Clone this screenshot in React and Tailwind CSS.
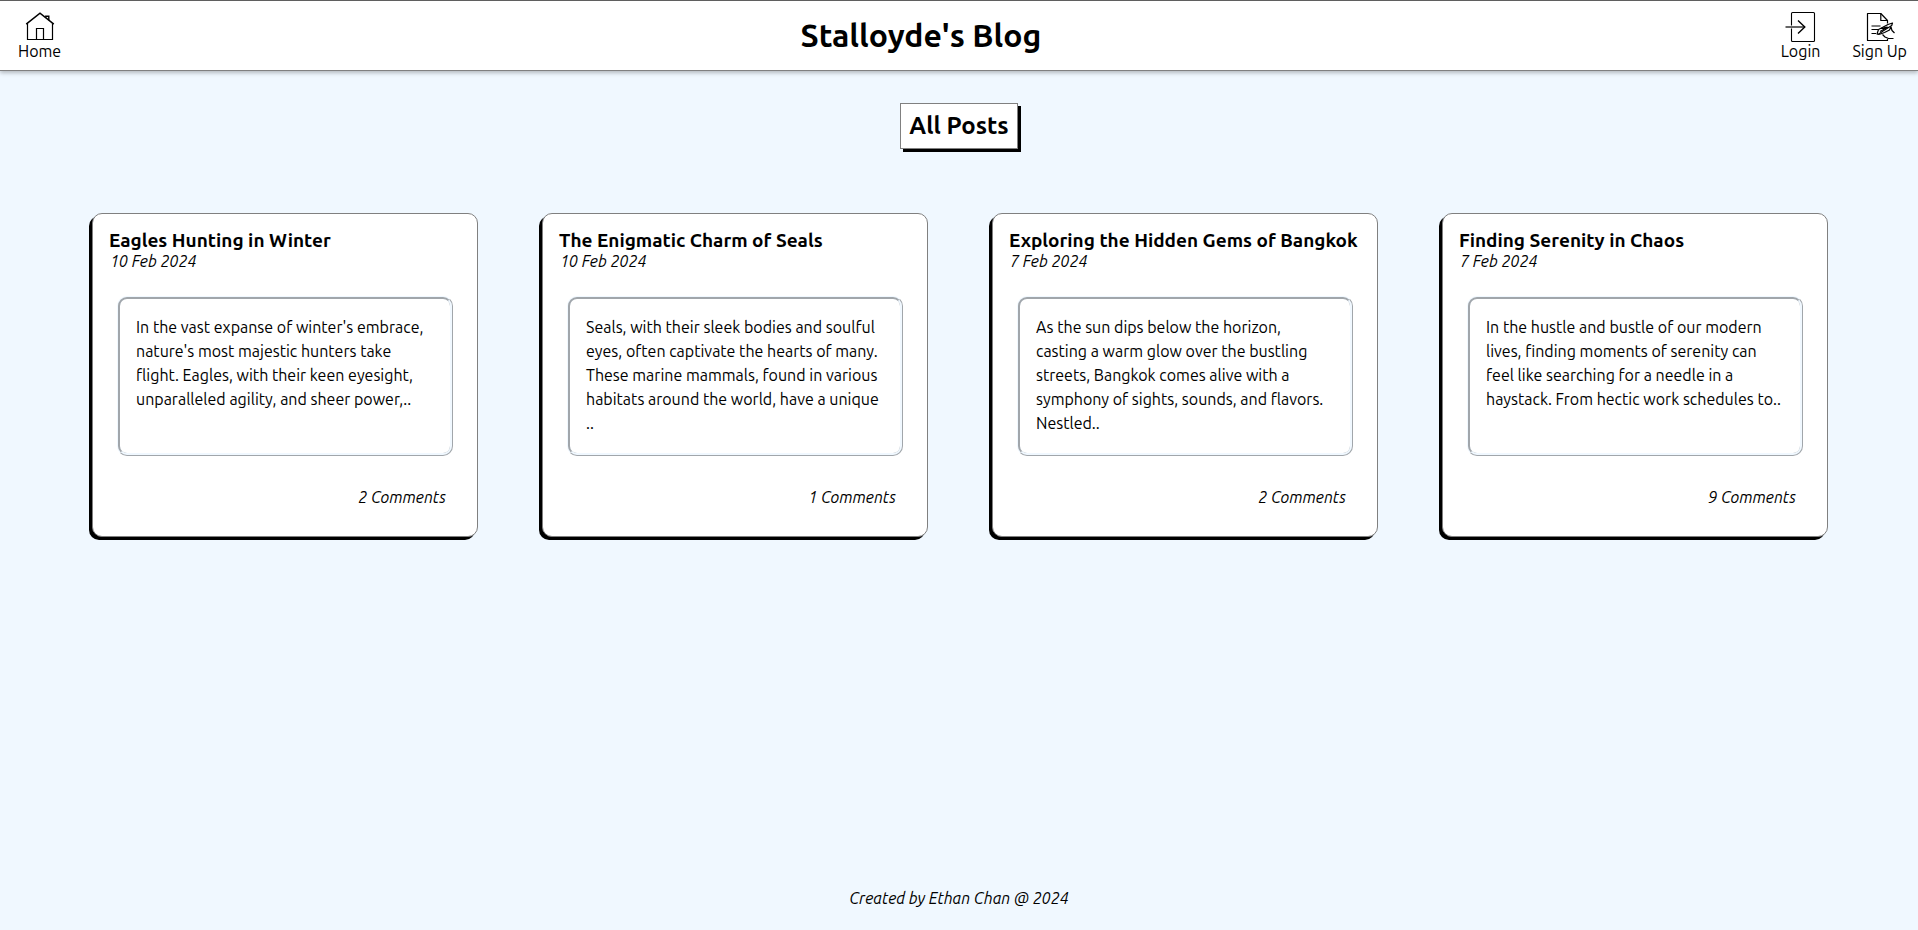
const posts = [
  {
    title: "Eagles Hunting in Winter",
    date: "10 Feb 2024",
    excerpt:
      "In the vast expanse of winter's embrace, nature's most majestic hunters take flight. Eagles, with their keen eyesight, unparalleled agility, and sheer power,..",
    comments: 2,
  },
  {
    title: "The Enigmatic Charm of Seals",
    date: "10 Feb 2024",
    excerpt:
      "Seals, with their sleek bodies and soulful eyes, often captivate the hearts of many. These marine mammals, found in various habitats around the world, have a unique ..",
    comments: 1,
  },
  {
    title: "Exploring the Hidden Gems of Bangkok",
    date: "7 Feb 2024",
    excerpt:
      "As the sun dips below the horizon, casting a warm glow over the bustling streets, Bangkok comes alive with a symphony of sights, sounds, and flavors. Nestled..",
    comments: 2,
  },
  {
    title: "Finding Serenity in Chaos",
    date: "7 Feb 2024",
    excerpt:
      "In the hustle and bustle of our modern lives, finding moments of serenity can feel like searching for a needle in a haystack. From hectic work schedules to..",
    comments: 9,
  },
];

function HomeIcon() {
  return (
    <svg viewBox="0 0 32 32" className="h-8 w-8" fill="none" stroke="#000" strokeWidth="1.2" aria-hidden="true">
      <path d="M2.2 14.2 16 3.2l13.8 11" strokeWidth="1.5" />
      <path d="M3.5 13.2v16.3h25V13.2" />
      <path d="M12.5 29.5v-11h7v11" />
      <path d="M21.8 7.5V6.2h3v4" strokeWidth="1.4" />
    </svg>
  );
}

function LoginIcon() {
  return (
    <svg viewBox="0 0 32 32" className="h-8 w-8" fill="none" stroke="#000" strokeWidth="1.1" aria-hidden="true">
      <path d="M6.5 15.5V3.5q0-1 1-1h21q1 0 1 1v27q0 1-1 1h-21q-1 0-1-1V18.5" />
      <path d="M.5 17h19.2" strokeWidth="1.5" stroke="#333" />
      <path d="m13 10.5 6.8 6.5-6.8 6.5" strokeWidth="1.4" />
    </svg>
  );
}

function SignUpIcon() {
  return (
    <svg viewBox="0 0 32 32" className="h-8 w-8" fill="none" stroke="#000" strokeWidth="1.2" strokeLinejoin="round" aria-hidden="true">
      <path d="M23.5 29v1.5h-20v-27h13.3l6.7 7v3" />
      <path d="M16.8 3.5v7h6.7" />
      <path d="M7.5 16h9M7.5 19.5h7M7.5 23.5h4.5" strokeWidth="1.1" />
      <path d="m13 24 1.5-4.5 9.5-5 4.5-1.5-.8 2.5-8.7 5.5-4 3Z" />
      <path d="m17 18.5 6-1.5M16 21.5l8-4.5M13.5 24.5l3-.5 4-1.5 5-2.5 1.5-3.5M27 17l1 3.5 2.5 2.5M18.5 24.5l2.5 2.5 3.5 1.5h5" />
    </svg>
  );
}

function NavLink({ icon, label }) {
  return (
    <a href="#" className="flex flex-col items-center">
      {icon}
      <span className="text-base leading-[18px]">{label}</span>
    </a>
  );
}

function PostCard({ post }) {
  return (
    <article className="rounded-[10px] border border-[#808080] bg-white p-4 shadow-[-3px_3px_0_#000]">
      <h3 className="mb-0.5 text-[19px] leading-5 font-bold whitespace-nowrap">{post.title}</h3>
      <p className="pl-px text-base leading-[18px] italic">{post.date}</p>
      <p className="mx-2 mt-[26px] min-h-40 rounded-[10px] border-3 [border-style:ridge] border-[#f0f8ff] p-4 text-base leading-6">
        {post.excerpt}
      </p>
      <p className="mt-8 mr-[15px] mb-[14px] text-right text-base leading-[18px] italic">{post.comments} Comments</p>
    </article>
  );
}

export default function App() {
  return (
    <div className="flex min-h-screen flex-col bg-[#f0f8ff] font-['Ubuntu','Noto_Sans',sans-serif] text-black">
      <header className="flex items-center justify-between border-t border-b border-t-[#5f5f5f] border-b-[#808080] bg-white pt-[9px] pr-[11px] pb-[10px] pl-[18px] shadow-[0_2px_4px_rgba(0,0,0,0.25)]">
        <nav className="flex">
          <NavLink icon={<HomeIcon />} label="Home" />
        </nav>
        <h1 className="text-[32px] leading-10 font-bold">Stalloyde's Blog</h1>
        <nav className="flex gap-8">
          <NavLink icon={<LoginIcon />} label="Login" />
          <NavLink icon={<SignUpIcon />} label="Sign Up" />
        </nav>
      </header>
      <main className="flex flex-1 flex-col items-center pt-8">
        <h2 className="border border-[#808080] bg-white px-2 py-1 text-2xl leading-9 font-bold shadow-[3px_3px_0_#000]">All Posts</h2>
        <section className="mt-16 grid w-full grid-cols-4 gap-16 pr-[90px] pl-[92px]">
          {posts.map((post) => (
            <PostCard key={post.title} post={post} />
          ))}
        </section>
      </main>
      <footer className="pb-5 text-center text-base leading-6 italic">Created by Ethan Chan @ 2024</footer>
    </div>
  );
}
